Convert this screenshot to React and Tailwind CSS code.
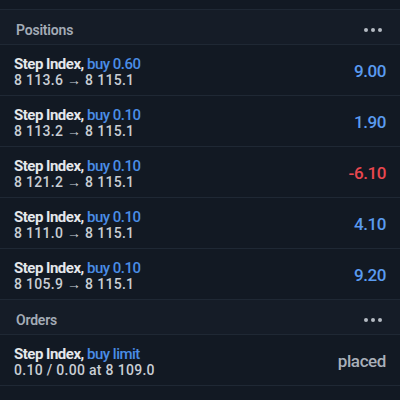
import React from 'react';

const positions = [
  { lot: '0.60', open: '8 113.6', close: '8 115.1', profit: '9.00' },
  { lot: '0.10', open: '8 113.2', close: '8 115.1', profit: '1.90' },
  { lot: '0.10', open: '8 121.2', close: '8 115.1', profit: '-6.10' },
  { lot: '0.10', open: '8 111.0', close: '8 115.1', profit: '4.10' },
  { lot: '0.10', open: '8 105.9', close: '8 115.1', profit: '9.20' },
];

function SectionHeader({ title }) {
  return (
    <div className="flex items-center justify-between h-[35px] pt-[6px] pl-4 pr-[18px] border-b border-[#1f2834] bg-[#151c27]">
      <span className="text-[14px] font-semibold text-[#a3abb6] tracking-[-0.2px]">{title}</span>
      <span className="flex gap-[3px]">
        <span className="w-[4px] h-[4px] rounded-full bg-[#b4bac2]" />
        <span className="w-[4px] h-[4px] rounded-full bg-[#b4bac2]" />
        <span className="w-[4px] h-[4px] rounded-full bg-[#b4bac2]" />
      </span>
    </div>
  );
}

function Row({ side, sub, value, valueClass }) {
  return (
    <div className="flex items-center justify-between h-[51px] pt-[4px] pl-[14px] pr-[14px] border-b border-[#1f2834]">
      <div className="flex flex-col leading-[16px]">
        <span className="text-[15px] font-bold text-[#e4e7eb] tracking-[-0.5px]">
          Step Index, <span className="font-medium text-[#4a8de6]">{side}</span>
        </span>
        <span className="text-[14px] font-medium text-[#c9ced5] tracking-[0.3px]">{sub}</span>
      </div>
      <span className={`text-[17px] font-medium tracking-[-0.4px] ${valueClass}`}>{value}</span>
    </div>
  );
}

export default function App() {
  return (
    <div className="w-[400px] h-[400px] overflow-hidden bg-[#121923] font-['Roboto',sans-serif]">
      <div className="h-[10px] border-b border-[#1f2834]" />
      <SectionHeader title="Positions" />
      {positions.map((p, i) => (
        <Row
          key={i}
          side={`buy ${p.lot}`}
          sub={`${p.open} → ${p.close}`}
          value={p.profit}
          valueClass={p.profit.startsWith('-') ? 'text-[#e9474f]' : 'text-[#5a9bf0]'}
        />
      ))}
      <SectionHeader title="Orders" />
      <Row side="buy limit" sub="0.10 / 0.00 at 8 109.0" value="placed" valueClass="text-[#a9b0b9]" />
    </div>
  );
}
